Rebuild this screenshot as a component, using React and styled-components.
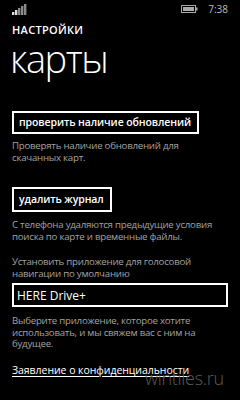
import React from 'react';
import styled, { createGlobalStyle } from 'styled-components';

const GlobalStyle = createGlobalStyle`
  html, body {
    margin: 0;
    padding: 0;
    background: #000;
  }
  body {
    font-family: "Open Sans", "Noto Sans", sans-serif;
    color: #fff;
  }
`;

const Screen = styled.div`
  position: relative;
  width: 240px;
  height: 400px;
  background: #000;
  overflow: hidden;
`;

const StatusBar = styled.div`
  height: 17px;
  display: flex;
  align-items: center;
  justify-content: space-between;
  padding: 0 12px;
`;

const StatusRight = styled.div`
  display: flex;
  align-items: center;
  gap: 10px;
`;

const Time = styled.span`
  font-size: 10px;
  color: #bdbdbd;
`;

const Content = styled.div`
  padding: 0 12px;
  display: flex;
  flex-direction: column;
`;

const AppTitle = styled.div`
  margin-top: 6px;
  font-size: 11px;
  font-weight: 600;
  letter-spacing: 0.3px;
  line-height: 14px;
`;

const PageTitle = styled.div`
  font-size: 38px;
  font-weight: 300;
  line-height: 42px;
  margin-left: -2px;
  letter-spacing: -1.5px;
`;

const Button = styled.button`
  align-self: flex-start;
  margin-top: ${(p) => p.$top}px;
  background: transparent;
  border: 2px solid #fff;
  color: #fff;
  font-family: "Open Sans", sans-serif;
  font-size: 10.5px;
  font-weight: 600;
  letter-spacing: -0.1px;
  height: ${(p) => p.$h}px;
  padding: 0 6px 0 5px;
  line-height: 1;
`;

const Hint = styled.p`
  margin: ${(p) => p.$top}px 0 0;
  font-size: 9.7px;
  letter-spacing: -0.25px;
  line-height: ${(p) => p.$lh || 12}px;
  color: #a3a3a3;
  white-space: nowrap;
`;

const Combo = styled.div`
  margin-top: 3px;
  height: 24px;
  border: 2px solid #fff;
  display: flex;
  align-items: center;
  padding: 0 3px;
  font-size: 12px;
  box-sizing: border-box;
`;

const Link = styled.span`
  margin-top: 14px;
  font-size: 10.5px;
  line-height: 13px;
  letter-spacing: -0.05px;
  color: #fff;
  text-decoration: underline;
  text-underline-offset: 2px;
  white-space: nowrap;
`;

const Watermark = styled.div`
  position: absolute;
  left: 145px;
  top: 366px;
  font-size: 18px;
  font-weight: 300;
  color: #5a5a5a;
  letter-spacing: -0.3px;
`;

function Signal() {
  const bars = [3, 5, 7, 9, 11];
  return (
    <svg width="16" height="12" viewBox="0 0 16 12">
      {bars.map((h, i) => (
        <rect key={i} x={i * 3} y={12 - h} width="2.4" height={h} fill={i < 2 ? '#ddd' : '#8a8a8a'} />
      ))}
    </svg>
  );
}

function Battery() {
  return (
    <svg width="17" height="8" viewBox="0 0 17 8">
      <rect x="0.5" y="0.5" width="14" height="7" fill="none" stroke="#aaa" />
      <rect x="2" y="2" width="11" height="4" fill="#aaa" />
      <rect x="15" y="2.5" width="1.5" height="3" fill="#aaa" />
    </svg>
  );
}

export default function App() {
  return (
    <>
      <GlobalStyle />
      <Screen>
        <StatusBar>
          <Signal />
          <StatusRight>
            <Battery />
            <Time>7:38</Time>
          </StatusRight>
        </StatusBar>
        <Content>
          <AppTitle>НАСТРОЙКИ</AppTitle>
          <PageTitle>карты</PageTitle>
          <Button $top={32} $h={23}>проверить наличие обновлений</Button>
          <Hint $top={6}>Проверять наличие обновлений для<br />скачанных карт.</Hint>
          <Button $top={23} $h={25}>удалить журнал</Button>
          <Hint $top={7}>С телефона удаляются предыдущие условия<br />поиска по карте и временные файлы.</Hint>
          <Hint $top={13}>Установить приложение для голосовой<br />навигации по умолчанию</Hint>
          <Combo>HERE Drive+</Combo>
          <Hint $top={8} $lh={11.5}>Выберите приложение, которое хотите<br />использовать, и мы свяжем вас с ним на<br />будущее.</Hint>
          <Link>Заявление о конфиденциальности</Link>
        </Content>
        <Watermark>wintiles.ru</Watermark>
      </Screen>
    </>
  );
}
